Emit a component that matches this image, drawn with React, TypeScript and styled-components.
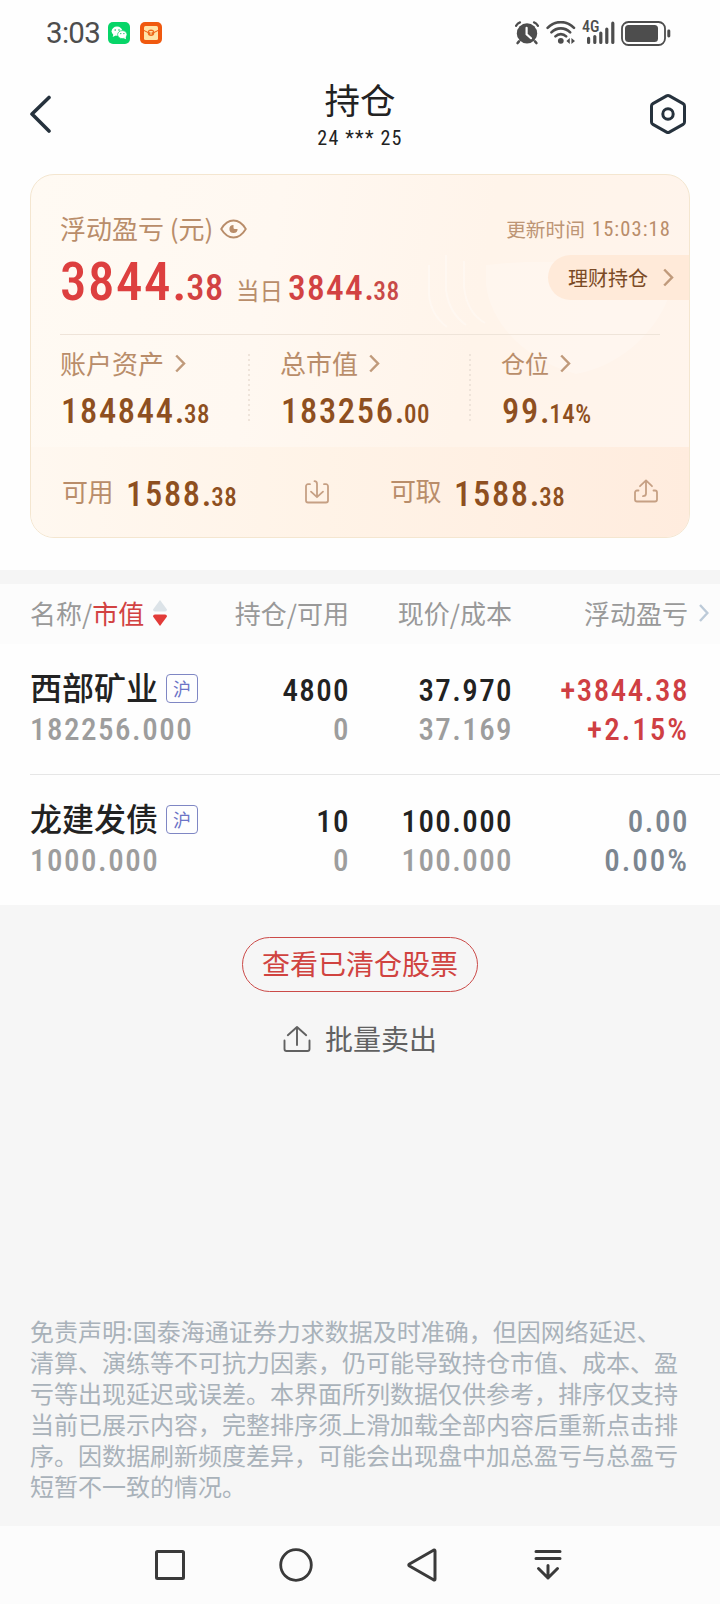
import React from "react";
import styled, { createGlobalStyle } from "styled-components";

const Global = createGlobalStyle`
  * { box-sizing: border-box; }
  body {
    margin: 0;
    background: #fefefe;
    font-family: Roboto, "Noto Sans CJK SC", sans-serif;
    color: #222;
  }
  svg { display: block; flex: none; }
`;

const Screen = styled.div`
  width: 720px;
  height: 1604px;
  display: flex;
  flex-direction: column;
  overflow: hidden;
`;

const Cjk = styled.span<{ $size: number; $line?: number; $color?: string; $weight?: number; $track?: number }>`
  font-family: "Noto Sans CJK SC", sans-serif;
  font-size: ${(p) => p.$size}px;
  line-height: ${(p) => p.$line ?? 30}px;
  color: ${(p) => p.$color ?? "inherit"};
  font-weight: ${(p) => p.$weight ?? 400};
  letter-spacing: ${(p) => p.$track ?? 0}px;
  white-space: nowrap;
`;

const Num = styled.span<{ $size: number; $line?: number; $color?: string; $weight?: number; $track?: number }>`
  font-family: Roboto, sans-serif;
  font-stretch: 75%;
  font-size: ${(p) => p.$size}px;
  line-height: ${(p) => p.$line ?? 40}px;
  color: ${(p) => p.$color ?? "inherit"};
  font-weight: ${(p) => p.$weight ?? 400};
  letter-spacing: ${(p) => p.$track ?? 0}px;
  white-space: nowrap;
`;

const Decimals = styled(Num)`
  margin-left: -2px;
`;

const StatusBar = styled.div`
  height: 66px;
  flex: none;
  padding: 0 49px 0 46px;
  display: flex;
  align-items: center;
  justify-content: space-between;
`;

const StatusGroup = styled.div<{ $gap: number }>`
  display: flex;
  align-items: center;
  gap: ${(p) => p.$gap}px;
`;

const Clock = styled.span`
  margin-right: -2px;
  font-size: 29.5px;
  line-height: 40px;
  letter-spacing: -0.7px;
  color: #4d4d4d;
`;

const Header = styled.header`
  height: 108px;
  flex: none;
  padding: 0 33px 0 29px;
  display: flex;
  align-items: flex-start;
  justify-content: space-between;
`;

const HeaderIcon = styled.div<{ $w: number }>`
  width: ${(p) => p.$w}px;
  padding-top: 27px;
  display: flex;
`;

const TitleBlock = styled.div`
  padding-top: 12px;
  display: flex;
  flex-direction: column;
  align-items: center;
`;

const Card = styled.section`
  position: relative;
  margin: 0 30px;
  height: 364px;
  flex: none;
  border: 1px solid #f4e6d0;
  border-radius: 24px;
  overflow: hidden;
  background: linear-gradient(100deg, #fffaf3 0%, #fff8f1 35%, #fff4ea 65%, #fff4ec 100%);
  display: flex;
  flex-direction: column;
`;

const Watermark = styled.svg`
  position: absolute;
  left: 380px;
  top: 0;
`;

const CardTop = styled.div`
  position: relative;
  height: 159px;
  margin-left: 29px;
  padding-top: 35px;
  display: flex;
  justify-content: space-between;
`;

const CardTopRight = styled.div`
  display: flex;
  flex-direction: column;
  align-items: flex-end;
`;

const TitleRow = styled.div`
  height: 36px;
  display: flex;
  align-items: center;
`;

const EyeSlot = styled.div`
  margin: 2px 0 0 7px;
`;

const ProfitRow = styled.div`
  margin-top: 6px;
  display: flex;
  align-items: baseline;
`;

const DayLabel = styled(Cjk)`
  margin: 0 5px 0 12px;
`;

const UpdateTime = styled.div`
  height: 36px;
  padding: 1px 18px 0 0;
  display: flex;
  align-items: center;
  gap: 7px;
`;

const WealthPill = styled.button`
  margin: 9px 0 0;
  width: 141px;
  height: 45px;
  border: 0;
  padding: 0 15px 0 20px;
  border-radius: 23px 0 0 23px;
  background: #ffead9;
  display: flex;
  align-items: center;
  justify-content: space-between;
`;

const Divider = styled.div`
  position: relative;
  height: 1px;
  flex: none;
  margin: 0 29px;
  background: #efe4d9;
`;

const Stats = styled.div`
  position: relative;
  height: 112px;
  padding: 13px 0 0 29px;
  display: grid;
  grid-template-columns: 220px 221px 1fr;
`;

const Stat = styled.div`
  display: flex;
  justify-content: space-between;
`;

const StatLabel = styled.div<{ $gap: number }>`
  display: flex;
  align-items: center;
  gap: ${(p) => p.$gap}px;
  margin-bottom: 13px;
`;

const Amount = styled.div`
  padding-left: 1px;
  display: flex;
  align-items: baseline;
`;

const DotLine = styled.div`
  width: 2px;
  height: 68px;
  margin: 6px 30px 0 0;
  background: repeating-linear-gradient(#efe4da 0 2px, transparent 2px 5px);
`;

const CashBand = styled.div`
  position: relative;
  flex: 1;
  padding: 0 0 0 31px;
  background: linear-gradient(90deg, #fff8f0 0%, #fff3e7 45%, #ffecde 100%);
  display: grid;
  grid-template-columns: 243px 85px 244px auto;
  align-items: start;
`;

const CashItem = styled.div`
  padding-top: 27px;
  display: flex;
  align-items: flex-start;
  gap: 12px;
`;

const CashLabel = styled(Cjk)<{ $top: number }>`
  margin-top: ${(p) => p.$top}px;
`;

const CashIcon = styled.div<{ $top: number }>`
  padding-top: ${(p) => p.$top}px;
`;

const Gap = styled.div`
  height: 14px;
  flex: none;
  margin-top: 32px;
  background: #f5f5f5;
`;

const Columns = styled.div`
  display: grid;
  grid-template-columns: 171px 148px 163px 176px 1fr;
`;

const TableHead = styled(Columns)`
  height: 60px;
  flex: none;
  padding: 0 0 2px 30px;
  align-items: center;
  background: #fcfcfc;
  color: #999;
`;

const HeadCell = styled.div<{ $end?: boolean }>`
  display: flex;
  align-items: center;
  justify-content: ${(p) => (p.$end ? "flex-end" : "flex-start")};
`;

const SortSlot = styled.div`
  margin-left: 9px;
`;

const MoreSlot = styled.div`
  padding-left: 11px;
`;

const Holding = styled(Columns)<{ $line: boolean }>`
  height: ${(p) => (p.$line ? 131 : 130)}px;
  flex: none;
  margin-left: 30px;
  padding-top: 27px;
  border-bottom: ${(p) => (p.$line ? "1px solid #e6e6e6" : "0")};
`;

const HoldingCell = styled.div<{ $end?: boolean }>`
  display: flex;
  flex-direction: column;
  align-items: ${(p) => (p.$end ? "flex-end" : "flex-start")};
  margin-right: ${(p) => (p.$end ? -1 : 0)}px;
`;

const NameRow = styled.div`
  height: 39px;
  margin: -4px 0 4px;
  display: flex;
  align-items: center;
  gap: 8px;
`;

const Market = styled.span`
  width: 32px;
  height: 29px;
  margin-top: 4px;
  padding-bottom: 1px;
  border: 1px solid #7f87c4;
  border-radius: 4px;
  display: flex;
  align-items: center;
  justify-content: center;
`;

const Footer = styled.div`
  flex: 1;
  background: #f6f6f6;
  display: flex;
  flex-direction: column;
  align-items: center;
  padding-top: 32px;
`;

const ClearedButton = styled.button`
  width: 236px;
  height: 55px;
  padding: 0 0 3px;
  border: 1px solid #cb4a48;
  border-radius: 28px;
  background: transparent;
  display: flex;
  align-items: center;
  justify-content: center;
`;

const BatchSell = styled.div`
  height: 40px;
  margin-top: 27px;
  display: flex;
  align-items: center;
  gap: 14px;
`;

const BatchLabel = styled(Cjk)`
  padding-bottom: 3px;
`;

const Disclaimer = styled.div`
  margin: auto 0 25px;
  width: 660px;
  font-family: "Noto Sans CJK SC", sans-serif;
  font-size: 24px;
  line-height: 31px;
  color: #a9b2ba;
  white-space: nowrap;
`;

const NavBar = styled.nav`
  height: 78px;
  flex: none;
  background: #fcfcfc;
  padding-left: 107px;
  display: grid;
  grid-template-columns: repeat(4, 126px);
  align-items: center;
  justify-items: center;
`;

const Chevron = ({ color = "#c09a7b", w = 2.5 }: { color?: string; w?: number }) => (
  <svg width="11" height="19" viewBox="0 0 11 19" fill="none" stroke={color} strokeWidth={w}>
    <path d="M1.2 1.5 9 9.5 1.2 17.5" />
  </svg>
);

const MoreChevron = () => (
  <svg width="10" height="18" viewBox="0 0 10 18" fill="none" stroke="#bccad8" strokeWidth="2.4">
    <path d="M1 1 8.4 9 1 17" />
  </svg>
);

const WeChatIcon = () => (
  <svg width="22" height="22" viewBox="0 0 22 22">
    <rect width="22" height="22" rx="5" fill="#07d568" />
    <ellipse cx="9" cy="9.2" rx="5.4" ry="4.6" fill="#fff" />
    <path d="M5.5 12l-.8 3 3-1.6z" fill="#fff" />
    <ellipse cx="14.3" cy="12.6" rx="4.7" ry="4" fill="#fff" stroke="#07d568" strokeWidth=".7" />
    <path d="M15.5 16l2.6 1.2-.6-2.6z" fill="#fff" />
    <g fill="#07c160">
      <circle cx="7.2" cy="8" r=".8" />
      <circle cx="11" cy="8" r=".8" />
      <circle cx="12.8" cy="11.6" r=".7" />
      <circle cx="15.9" cy="11.6" r=".7" />
    </g>
  </svg>
);

const WalletIcon = () => (
  <svg width="22" height="22" viewBox="0 0 22 22">
    <rect width="22" height="22" rx="5" fill="#f0590f" />
    <rect x="4" y="4" width="14" height="14" rx="1.5" fill="#ffe3a8" />
    <path d="M4 8.5 8 10.5M18 8.5l-4 2" stroke="#f0590f" strokeWidth="1" />
    <circle cx="11" cy="10.8" r="3.3" fill="#ee6a1c" />
    <path d="M9.3 9.6h3.4M11 9.6v3.2" stroke="#ffe3a8" strokeWidth="1.1" />
  </svg>
);

const AlarmIcon = () => (
  <svg width="24" height="24" viewBox="0 0 24 24" fill="none" stroke="#4d4d4d" strokeLinecap="round">
    <circle cx="12" cy="12.4" r="10.2" fill="#4d4d4d" stroke="none" />
    <path d="M1 4.8C2 3.2 3.3 2 5 1.4M23 4.8C22 3.2 20.7 2 19 1.4" strokeWidth="2.2" />
    <path d="M4 20.4 2.6 22M20 20.4 21.4 22" strokeWidth="2.6" />
    <path d="M11.6 6.8v6.4l4.4 4" stroke="#fff" strokeWidth="2.2" />
  </svg>
);

const WifiIcon = () => (
  <svg width="30" height="24" viewBox="0 0 30 24" fill="none" stroke="#4d4d4d" strokeWidth="2.6" strokeLinecap="round">
    <path d="M1.6 6.8C9-.8 20.6-.8 28 6.8" />
    <path d="M5.4 11.4c5.3-5.4 13.5-5.4 18.8 0" />
    <path d="M9.4 15.4c3.1-3.1 7.7-3.1 10.8 0" />
    <circle cx="14.8" cy="19.8" r="2.9" fill="#4d4d4d" stroke="none" />
    <path d="M23.8 17v6L20.4 20zM25.4 17v6l3.6-3z" fill="#4d4d4d" stroke="none" />
  </svg>
);

const SignalGroup = styled.div`
  position: relative;
  width: 33px;
  height: 24px;
  margin: 0 -1px 0 -1px;
`;

const SignalTag = styled.span`
  position: absolute;
  left: 0;
  top: -1px;
  font-size: 16px;
  line-height: 14px;
  font-weight: 500;
  font-stretch: 75%;
  color: #4d4d4d;
`;

const SignalBars = () => (
  <svg width="33" height="24" viewBox="0 0 33 24" stroke="#4d4d4d" strokeWidth="3.2" strokeLinecap="round">
    <path d="M6.6 17.4v4M12.8 15.6v5.8M18.8 12v9.4M24.8 8v13.4M30.8 2.2v19.2" />
  </svg>
);

const BatteryIcon = () => (
  <svg width="50" height="25" viewBox="0 0 50 25">
    <rect x="1" y="1" width="43" height="23" rx="6.5" fill="none" stroke="#4d4d4d" strokeWidth="1.8" />
    <rect x="4" y="4" width="33" height="17" rx="3.5" fill="#4d4d4d" />
    <rect x="46.3" y="8.5" width="3" height="8" rx="1.4" fill="#4d4d4d" />
  </svg>
);

const BackIcon = () => (
  <svg width="22" height="40" viewBox="0 0 22 40" fill="none" stroke="#26323d" strokeWidth="3.6" strokeLinecap="round" strokeLinejoin="round">
    <path d="M20 4.5 3 21 20 38" />
  </svg>
);

const SettingsIcon = () => (
  <svg width="38" height="42" viewBox="0 0 38 42" fill="none" stroke="#26323d" strokeWidth="3" strokeLinejoin="round">
    <path d="M17.6 2.9q1.4-.8 2.8 0L34.1 10.6q1.4.8 1.4 2.4V29q0 1.6-1.4 2.4L20.4 39.1q-1.4.8-2.8 0L3.9 31.4Q2.5 30.6 2.5 29V13q0-1.6 1.4-2.4z" />
    <circle cx="19" cy="21" r="5.2" />
  </svg>
);

const EyeIcon = () => (
  <svg width="27" height="20" viewBox="0 0 27 20" fill="none" stroke="#b98d6a" strokeWidth="1.9">
    <path d="M1.2 10C4.5 4.5 8.8 1.5 13.5 1.5S22.5 4.5 25.8 10C22.5 15.5 18.2 18.5 13.5 18.5S4.5 15.5 1.2 10z" strokeLinejoin="round" />
    <path d="M13.5 5.9a4.1 4.1 0 1 0 4.1 4.1h-2.8a1.3 1.3 0 0 1-1.3-1.3z" fill="#b98d6a" stroke="none" />
  </svg>
);

const DepositIcon = () => (
  <svg width="24" height="24" viewBox="0 0 24 24" fill="none" stroke="#c6a084" strokeWidth="1.8" strokeLinecap="round" strokeLinejoin="round">
    <path d="M5 4.2H3a2 2 0 0 0-2 2V20.5a2 2 0 0 0 2 2H21a2 2 0 0 0 2-2V6.2a2 2 0 0 0-2-2H19" />
    <path d="M9.5 1.2Q12 1.2 12 4V17M6 11.6 12 17.2 18 11.6" />
  </svg>
);

const WithdrawIcon = () => (
  <svg width="24" height="24" viewBox="0 0 24 24" fill="none" stroke="#c6a084" strokeWidth="1.8" strokeLinecap="round" strokeLinejoin="round">
    <path d="M4.5 11.5H3a2 2 0 0 0-2 2V20.5a2 2 0 0 0 2 2H21a2 2 0 0 0 2-2V13.5a2 2 0 0 0-2-2H19.5" />
    <path d="M9 17.2Q12 17.2 12 14.5V1.5M6 7.2 12 1.4 18 7.2" />
  </svg>
);

const SellIcon = () => (
  <svg width="28" height="28" viewBox="0 0 28 28" fill="none" stroke="#616161" strokeWidth="1.9" strokeLinecap="round" strokeLinejoin="round">
    <path d="M1.5 15.5V24a2 2 0 0 0 2 2H24.5a2 2 0 0 0 2-2V15.5" />
    <path d="M14 20V2.5M4.8 10.2 14 2 23.2 10.2" />
  </svg>
);

const SortIcon = () => (
  <svg width="14" height="26" viewBox="0 0 14 26">
    <path d="M7 0 14 9.5Q14 11.5 12 11.5H2Q0 11.5 0 9.5z" fill="#dce3e8" />
    <path d="M7 26 14 16.5Q14 14.5 12 14.5H2Q0 14.5 0 16.5z" fill="#e23b38" />
  </svg>
);

const Money = ({ whole, part }: { whole: string; part: string }) => (
  <Amount>
    <Num $size={34.5} $weight={500} $color="#8e4f20" $track={1.7}>{whole}.</Num>
    <Decimals $size={25} $weight={500} $color="#8e4f20" $track={0.5}>{part}</Decimals>
  </Amount>
);

const stats = [
  { label: "账户资产", whole: "184844", part: "38", size: 26, gap: 11 },
  { label: "总市值", whole: "183256", part: "00", size: 26, gap: 11 },
  { label: "仓位", whole: "99", part: "14%", size: 24, gap: 11 },
];

const holdings = [
  { name: "西部矿业", value: "182256.000", qty: "4800", free: "0", price: "37.970", cost: "37.169", gain: "+3844.38", rate: "+2.15%", color: "#cf3f43" },
  { name: "龙建发债", value: "1000.000", qty: "10", free: "0", price: "100.000", cost: "100.000", gain: "0.00", rate: "0.00%", color: "#7c8690" },
];

const disclaimer = [
  "免责声明:国泰海通证券力求数据及时准确，但因网络延迟、",
  "清算、演练等不可抗力因素，仍可能导致持仓市值、成本、盈",
  "亏等出现延迟或误差。本界面所列数据仅供参考，排序仅支持",
  "当前已展示内容，完整排序须上滑加载全部内容后重新点击排",
  "序。因数据刷新频度差异，可能会出现盘中加总盈亏与总盈亏",
  "短暂不一致的情况。",
];

const TAN = "#b98d6a";

export default function App() {
  return (
    <Screen>
      <Global />
      <StatusBar>
        <StatusGroup $gap={10}>
          <Clock>3:03</Clock>
          <WeChatIcon />
          <WalletIcon />
        </StatusGroup>
        <StatusGroup $gap={7}>
          <AlarmIcon />
          <WifiIcon />
          <SignalGroup>
            <SignalBars />
            <SignalTag>4G</SignalTag>
          </SignalGroup>
          <BatteryIcon />
        </StatusGroup>
      </StatusBar>

      <Header>
        <HeaderIcon $w={42}><BackIcon /></HeaderIcon>
        <TitleBlock>
          <Cjk $size={35.5} $line={42}>持仓</Cjk>
          <Num $size={20} $line={36} $track={1.2}>24 *** 25</Num>
        </TitleBlock>
        <HeaderIcon $w={38}><SettingsIcon /></HeaderIcon>
      </Header>

      <Card>
        <Watermark width="280" height="272" viewBox="0 0 280 272" fill="none">
          <path d="M75 90Q160 80 260 100V115C250 150 215 190 165 199C115 185 80 150 75 110z" fill="#fff" fillOpacity=".2" />
          <path d="M18 90V120Q20 140 36 152M35 80V115Q38 138 55 150M53 86V112Q56 138 74 148" stroke="#fff" strokeOpacity=".3" strokeWidth="2" />
        </Watermark>
        <CardTop>
          <div>
            <TitleRow>
              <Cjk $size={26} $color={TAN}>浮动盈亏 (元)</Cjk>
              <EyeSlot><EyeIcon /></EyeSlot>
            </TitleRow>
            <ProfitRow>
              <Num $size={53} $line={60} $weight={500} $color="#dd3f3f" $track={1.5}>3844.</Num>
              <Decimals $size={36.5} $weight={500} $color="#d24242" $track={0.6}>38</Decimals>
              <DayLabel $size={23.5} $color={TAN}>当日</DayLabel>
              <Num $size={35.5} $weight={500} $color="#d24242" $track={1.3}>3844.</Num>
              <Decimals $size={25.5} $weight={500} $color="#c94a48" $track={0.5}>38</Decimals>
            </ProfitRow>
          </div>
          <CardTopRight>
            <UpdateTime>
              <Cjk $size={19.7} $color="#bd9575">更新时间</Cjk>
              <Num $size={20.5} $color="#b98d6a" $track={1.1}>15:03:18</Num>
            </UpdateTime>
            <WealthPill>
              <Cjk $size={20} $color="#7b4a26">理财持仓</Cjk>
              <Chevron />
            </WealthPill>
          </CardTopRight>
        </CardTop>
        <Divider />
        <Stats>
          {stats.map((s, i) => (
            <Stat key={s.label}>
              <div>
                <StatLabel $gap={s.gap}>
                  <Cjk $size={s.size} $color={TAN}>{s.label}</Cjk>
                  <Chevron />
                </StatLabel>
                <Money whole={s.whole} part={s.part} />
              </div>
              {i < 2 && <DotLine />}
            </Stat>
          ))}
        </Stats>
        <CashBand>
          <CashItem>
            <CashLabel $top={2} $size={26} $color={TAN} $track={-0.5}>可用</CashLabel>
            <Money whole="1588" part="38" />
          </CashItem>
          <CashIcon $top={33}><DepositIcon /></CashIcon>
          <CashItem>
            <CashLabel $top={1} $size={26} $color={TAN} $track={-0.5}>可取</CashLabel>
            <Money whole="1588" part="38" />
          </CashItem>
          <CashIcon $top={32}><WithdrawIcon /></CashIcon>
        </CashBand>
      </Card>

      <Gap />
      <TableHead>
        <HeadCell>
          <Cjk $size={26}>名称/</Cjk>
          <Cjk $size={26} $color="#d24242">市值</Cjk>
          <SortSlot><SortIcon /></SortSlot>
        </HeadCell>
        <HeadCell $end><Cjk $size={26}>持仓/可用</Cjk></HeadCell>
        <HeadCell $end><Cjk $size={26}>现价/成本</Cjk></HeadCell>
        <HeadCell $end><Cjk $size={26}>浮动盈亏</Cjk></HeadCell>
        <MoreSlot><MoreChevron /></MoreSlot>
      </TableHead>
      {holdings.map((h, i) => (
        <Holding key={h.name} $line={i === 0}>
          <HoldingCell>
            <NameRow>
              <Cjk $size={32} $line={39} $weight={500}>{h.name}</Cjk>
              <Market><Cjk $size={18} $line={26} $color="#6c74c6">沪</Cjk></Market>
            </NameRow>
            <Num $size={31} $line={39} $weight={500} $color="#9d9d9d" $track={1.5}>{h.value}</Num>
          </HoldingCell>
          <HoldingCell $end>
            <Num $size={31} $line={39} $weight={500} $track={1.4}>{h.qty}</Num>
            <Num $size={31} $line={39} $weight={500} $color="#9d9d9d" $track={1.4}>{h.free}</Num>
          </HoldingCell>
          <HoldingCell $end>
            <Num $size={31} $line={39} $weight={500} $track={1.4}>{h.price}</Num>
            <Num $size={31} $line={39} $weight={500} $color="#9d9d9d" $track={1.4}>{h.cost}</Num>
          </HoldingCell>
          <HoldingCell $end>
            <Num $size={31} $line={39} $weight={500} $color={h.color} $track={1.5}>{h.gain}</Num>
            <Num $size={31} $line={39} $weight={500} $color={h.color} $track={2}>{h.rate}</Num>
          </HoldingCell>
        </Holding>
      ))}

      <Footer>
        <ClearedButton>
          <Cjk $size={28} $line={40} $color="#d04340">查看已清仓股票</Cjk>
        </ClearedButton>
        <BatchSell>
          <SellIcon />
          <BatchLabel $size={28} $line={40} $color="#616161">批量卖出</BatchLabel>
        </BatchSell>
        <Disclaimer>
          {disclaimer.map((line) => (
            <div key={line}>{line}</div>
          ))}
        </Disclaimer>
      </Footer>

      <NavBar>
        <svg width="34" height="34" viewBox="0 0 34 34" fill="none" stroke="#3a3a3a" strokeWidth="3">
          <rect x="3.5" y="3.5" width="27" height="27" rx="1" />
        </svg>
        <svg width="34" height="34" viewBox="0 0 34 34" fill="none" stroke="#3a3a3a" strokeWidth="2.8">
          <circle cx="17" cy="17" r="15.3" />
        </svg>
        <svg width="34" height="34" viewBox="0 0 34 34" fill="none" stroke="#3a3a3a" strokeWidth="3" strokeLinejoin="round">
          <path d="M28.5 2.2Q30 1.5 30 3V31Q30 32.5 28.5 31.8L4.500 18Q3 17 4.500 16z" />
        </svg>
        <svg width="30" height="34" viewBox="0 0 30 34" fill="none" stroke="#3a3a3a" strokeWidth="3" strokeLinecap="round" strokeLinejoin="round">
          <path d="M3 3.5H27M3 10.5H27M15 17.5V30M5.5 20.5 15 30 24.5 20.5" />
        </svg>
      </NavBar>
    </Screen>
  );
}
